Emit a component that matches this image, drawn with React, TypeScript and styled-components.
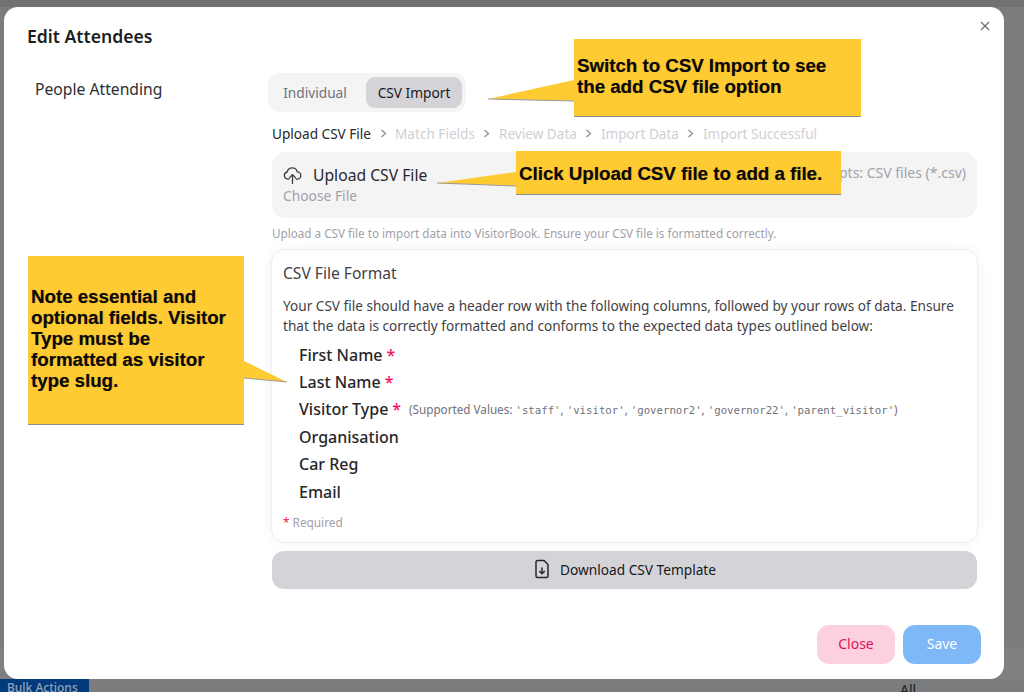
import React from "react";
import styled, { createGlobalStyle } from "styled-components";

const Global = createGlobalStyle`
  html, body { margin: 0; padding: 0; height: 100%; }
  body { font-family: "Noto Sans", "Open Sans", sans-serif; color: #11181c; }
`;

const Backdrop = styled.div`
  position: relative;
  width: 1024px;
  height: 692px;
  overflow: hidden;
  background: linear-gradient(#707172 0 7px, #7b7c7d 7px 647px, #7f8081 647px 679px, #7b7c7d 679px);
  padding: 7px 20px 13px 4px;
  box-sizing: border-box;
`;
const BulkActions = styled.div`
  position: absolute;
  left: 0;
  bottom: -3px;
  width: 89px;
  height: 16px;
  background: #023a7c;
  color: #93a3b5;
  font-size: 12px;
  font-weight: 500;
  line-height: 17px;
  padding-left: 7px;
  box-sizing: border-box;
`;
const AllLabel = styled.div`
  position: absolute;
  left: 900px;
  top: 681px;
  font-size: 14px;
  line-height: 18px;
  color: #1c1d1f;
`;
const Modal = styled.div`
  position: relative;
  width: 1000px;
  height: 672px;
  background: #fff;
  border-radius: 14px;
  display: flex;
  flex-direction: column;
  box-sizing: border-box;
`;
const CloseX = styled.button`
  position: absolute;
  top: 12px;
  right: 12px;
  width: 14px;
  height: 14px;
  padding: 0;
  border: 0;
  background: none;
  color: #71717a;
  display: flex;
  align-items: center;
  justify-content: center;
`;
const Title = styled.h2`
  margin: 0;
  padding: 16px 23px 0;
  font-size: 17.6px;
  line-height: 26px;
  font-weight: 600;
  color: #1c1f22;
`;
const Body = styled.div`
  display: grid;
  grid-template-columns: 233px 709px;
  padding: 24px 0 0 31px;
  flex: 1;
`;
const FieldLabel = styled.div`
  font-size: 15.7px;
  line-height: 22px;
  padding-top: 5px;
  color: #2b2f33;
`;
const Content = styled.div`
  display: flex;
  flex-direction: column;
  align-items: stretch;
  margin-left: 4px;
`;
const Tabs = styled.div`
  align-self: flex-start;
  display: flex;
  margin-left: -4px;
  width: 198px;
  height: 39px;
  box-sizing: border-box;
  padding: 4px;
  background: #f4f4f5;
  border-radius: 12px;
`;
const Tab = styled.div<{ $active?: boolean }>`
  width: ${(p) => (p.$active ? "96px" : "94px")};
  height: 31px;
  box-sizing: border-box;
  padding-right: ${(p) => (p.$active ? "0" : "8px")};
  border-radius: 9px;
  display: flex;
  align-items: center;
  justify-content: center;
  font-size: 13.7px;
  color: ${(p) => (p.$active ? "#17191c" : "#71717a")};
  background: ${(p) => (p.$active ? "#d4d4d8" : "transparent")};
`;
const Steps = styled.div`
  display: flex;
  align-items: center;
  gap: 7.5px;
  margin-top: 10px;
  height: 22px;
  font-size: 13.6px;
`;
const Step = styled.span<{ $current?: boolean }>`
  color: ${(p) => (p.$current ? "#27272a" : "#d0d0d4")};
`;
const Chevron = styled.svg`
  width: 9px;
  height: 9px;
  color: #8f8f96;
  fill: none;
  stroke: currentColor;
  stroke-width: 1.3;
`;
const UploadBox = styled.div`
  margin-top: 8px;
  height: 66px;
  box-sizing: border-box;
  background: #f4f4f5;
  border-radius: 14px;
  padding: 11px 11px 0;
  display: flex;
  justify-content: space-between;
`;
const UploadLeft = styled.div`
  display: flex;
  flex-direction: column;
`;
const UploadTitle = styled.div`
  display: flex;
  align-items: center;
  gap: 11px;
  font-size: 15.7px;
  line-height: 24px;
  color: #27272a;
`;
const ChooseFile = styled.div`
  font-size: 13.8px;
  line-height: 20px;
  margin-top: -1px;
  color: #a1a1aa;
`;
const Accepts = styled.div`
  font-size: 14px;
  line-height: 20px;
  color: #a1a1aa;
`;
const Helper = styled.div`
  margin-top: 7px;
  font-size: 11.7px;
  line-height: 16px;
  color: #a1a1aa;
`;
const Card = styled.div`
  margin: 8px -1px 0;
  height: 294px;
  box-sizing: border-box;
  background: #fff;
  border-radius: 14px;
  border: 1px solid #eeeef0;
  box-shadow: 0 0 14px rgba(0, 0, 0, 0.05);
  padding: 12px 11px 0;
`;
const CardTitle = styled.div`
  font-size: 15.6px;
  line-height: 22px;
  color: #3f3f46;
`;
const CardText = styled.p`
  margin: 12px 0 0;
  font-size: 13.6px;
  line-height: 20px;
  color: #3f3f46;
`;
const FieldList = styled.ul`
  list-style: none;
  margin: 5px 0 0;
  padding: 0 0 0 16px;
`;
const FieldItem = styled.li`
  display: flex;
  align-items: center;
  height: 27.4px;
  font-size: 16px;
  font-weight: 500;
  color: #27272a;
`;
const Star = styled.span`
  color: #f31260;
  margin-left: 4px;
`;
const Supported = styled.span`
  margin-left: 8px;
  font-size: 11.7px;
  font-weight: 400;
  color: #71717a;
`;
const Code = styled.span`
  font-family: "DejaVu Sans Mono", "Liberation Mono", monospace;
  font-size: 10.7px;
`;
const Required = styled.div`
  margin-top: 9px;
  font-size: 11.8px;
  line-height: 16px;
  color: #a1a1aa;
`;
const RequiredStar = styled.span`
  color: #f31260;
`;
const DownloadButton = styled.button`
  margin-top: 8px;
  height: 38px;
  padding: 0 0 2px;
  border: 0;
  border-radius: 12px;
  background: #d4d4d8;
  display: flex;
  align-items: center;
  justify-content: center;
  gap: 9px;
  font-family: inherit;
  font-size: 13.7px;
  color: #17191c;
`;
const Footer = styled.div`
  display: flex;
  justify-content: flex-end;
  gap: 8px;
  padding: 0 23px 15px 0;
`;
const FooterButton = styled.button<{ $kind: "close" | "save" }>`
  width: 78px;
  height: 39px;
  padding: 0 0 2px;
  border: 0;
  border-radius: 12px;
  font-family: inherit;
  font-size: 14px;
  background: ${(p) => (p.$kind === "close" ? "#fdd0df" : "#7eb8f7")};
  color: ${(p) => (p.$kind === "close" ? "#dc1257" : "#ffffff")};
`;
const Callout = styled.div<{ $x: number; $y: number; $w: number; $h: number; $pt?: number; $pb?: number }>`
  position: absolute;
  left: ${(p) => p.$x}px;
  top: ${(p) => p.$y}px;
  width: ${(p) => p.$w}px;
  height: ${(p) => p.$h}px;
  box-sizing: border-box;
  padding: ${(p) => p.$pt ?? 0}px 0 ${(p) => p.$pb ?? 0}px 3px;
  display: flex;
  align-items: center;
  background: #ffcb33;
  box-shadow: 0 1px 0 #8d8d8d;
  font-family: "Liberation Sans", Arial, sans-serif;
  font-weight: 700;
  font-size: 18.7px;
  line-height: 21px;
  color: #0a0a0a;
  text-shadow: 0.4px 0.4px 0.8px rgba(0, 0, 0, 0.4);
`;
const Tail = styled.svg`
  position: absolute;
  left: 0;
  top: 0;
  width: 1024px;
  height: 692px;
  pointer-events: none;
`;

const stepNames = ["Match Fields", "Review Data", "Import Data", "Import Successful"];

const Arrow = () => (
  <Chevron viewBox="0 0 9 9">
    <path d="M2.5 1 L6.5 4.5 L2.5 8" />
  </Chevron>
);

export default function App() {
  return (
    <>
      <Global />
      <Backdrop>
        <BulkActions>Bulk Actions</BulkActions>
        <AllLabel>All</AllLabel>
        <Modal>
          <CloseX aria-label="Close">
            <svg width="10" height="10" viewBox="0 0 10 10" fill="none" stroke="currentColor" strokeWidth="1.3">
              <path d="M1 1 L9 9 M9 1 L1 9" />
            </svg>
          </CloseX>
          <Title>Edit Attendees</Title>
          <Body>
            <FieldLabel>People Attending</FieldLabel>
            <Content>
              <Tabs>
                <Tab>Individual</Tab>
                <Tab $active>CSV Import</Tab>
              </Tabs>
              <Steps>
                <Step $current>Upload CSV File</Step>
                {stepNames.map((name) => (
                  <React.Fragment key={name}>
                    <Arrow />
                    <Step>{name}</Step>
                  </React.Fragment>
                ))}
              </Steps>
              <UploadBox>
                <UploadLeft>
                  <UploadTitle>
                    <svg width="19" height="19" viewBox="0 0 24 24" fill="none" stroke="#3f3f46" strokeWidth="1.7" strokeLinecap="round" strokeLinejoin="round">
                      <path d="M12 11v11" />
                      <path d="M8 15l4-4 4 4" />
                      <path d="M7.500 16.500H6a4.500 4.500 0 0 1-.7-8.900A6.500 6.500 0 0 1 18 7.500a4.500 4.500 0 0 1 0 9h-1.500" />
                    </svg>
                    Upload CSV File
                  </UploadTitle>
                  <ChooseFile>Choose File</ChooseFile>
                </UploadLeft>
                <Accepts>Accepts: CSV files (*.csv)</Accepts>
              </UploadBox>
              <Helper>Upload a CSV file to import data into VisitorBook. Ensure your CSV file is formatted correctly.</Helper>
              <Card>
                <CardTitle>CSV File Format</CardTitle>
                <CardText>
                  Your CSV file should have a header row with the following columns, followed by your rows of data. Ensure that the data is correctly formatted and conforms to the expected data types outlined below:
                </CardText>
                <FieldList>
                  <FieldItem>First Name<Star>*</Star></FieldItem>
                  <FieldItem>Last Name<Star>*</Star></FieldItem>
                  <FieldItem>
                    Visitor Type<Star>*</Star>
                    <Supported>
                      (Supported Values: <Code>'staff'</Code>, <Code>'visitor'</Code>, <Code>'governor2'</Code>, <Code>'governor22'</Code>, <Code>'parent_visitor'</Code>)
                    </Supported>
                  </FieldItem>
                  <FieldItem>Organisation</FieldItem>
                  <FieldItem>Car Reg</FieldItem>
                  <FieldItem>Email</FieldItem>
                </FieldList>
                <Required><RequiredStar>*</RequiredStar> Required</Required>
              </Card>
              <DownloadButton>
                <svg width="18" height="20" viewBox="0 0 18 20" fill="none" stroke="#27272a" strokeWidth="1.5" strokeLinecap="round" strokeLinejoin="round">
                  <path d="M11 1.500H4.500A1.500 1.500 0 0 0 3 3v14a1.500 1.500 0 0 0 1.500 1.500h9A1.500 1.500 0 0 0 15 17V5.500z" />
                  <path d="M9 9v5.500M6.700 12.500 9 14.700l2.300-2.200" />
                </svg>
                Download CSV Template
              </DownloadButton>
            </Content>
          </Body>
          <Footer>
            <FooterButton $kind="close">Close</FooterButton>
            <FooterButton $kind="save">Save</FooterButton>
          </Footer>
        </Modal>
        <Tail viewBox="0 0 1024 692">
          <polygon points="488,99 574,80 574,101" fill="#ffcb33" />
          <polyline points="488,99 574,101" fill="none" stroke="#9a9a9a" strokeWidth="1" />
          <polygon points="437,183 516,172 516,186" fill="#ffcb33" />
          <polyline points="437,183 516,186" fill="none" stroke="#9a9a9a" strokeWidth="1" />
          <polygon points="244,361 287,382 244,378" fill="#ffcb33" />
          <polyline points="287,382 244,378" fill="none" stroke="#9a9a9a" strokeWidth="1" />
        </Tail>
        <Callout $x={574} $y={39} $w={287} $h={77} $pb={3}>
          <span>Switch to CSV Import to see<br />the add CSV file option</span>
        </Callout>
        <Callout $x={516} $y={151} $w={325} $h={43} $pt={1}>
          <span>Click Upload CSV file to add a file.</span>
        </Callout>
        <Callout $x={28} $y={256} $w={216} $h={168} $pb={4}>
          <span>Note essential and<br />optional fields. Visitor<br />Type must be<br />formatted as visitor<br />type slug.</span>
        </Callout>
      </Backdrop>
    </>
  );
}
